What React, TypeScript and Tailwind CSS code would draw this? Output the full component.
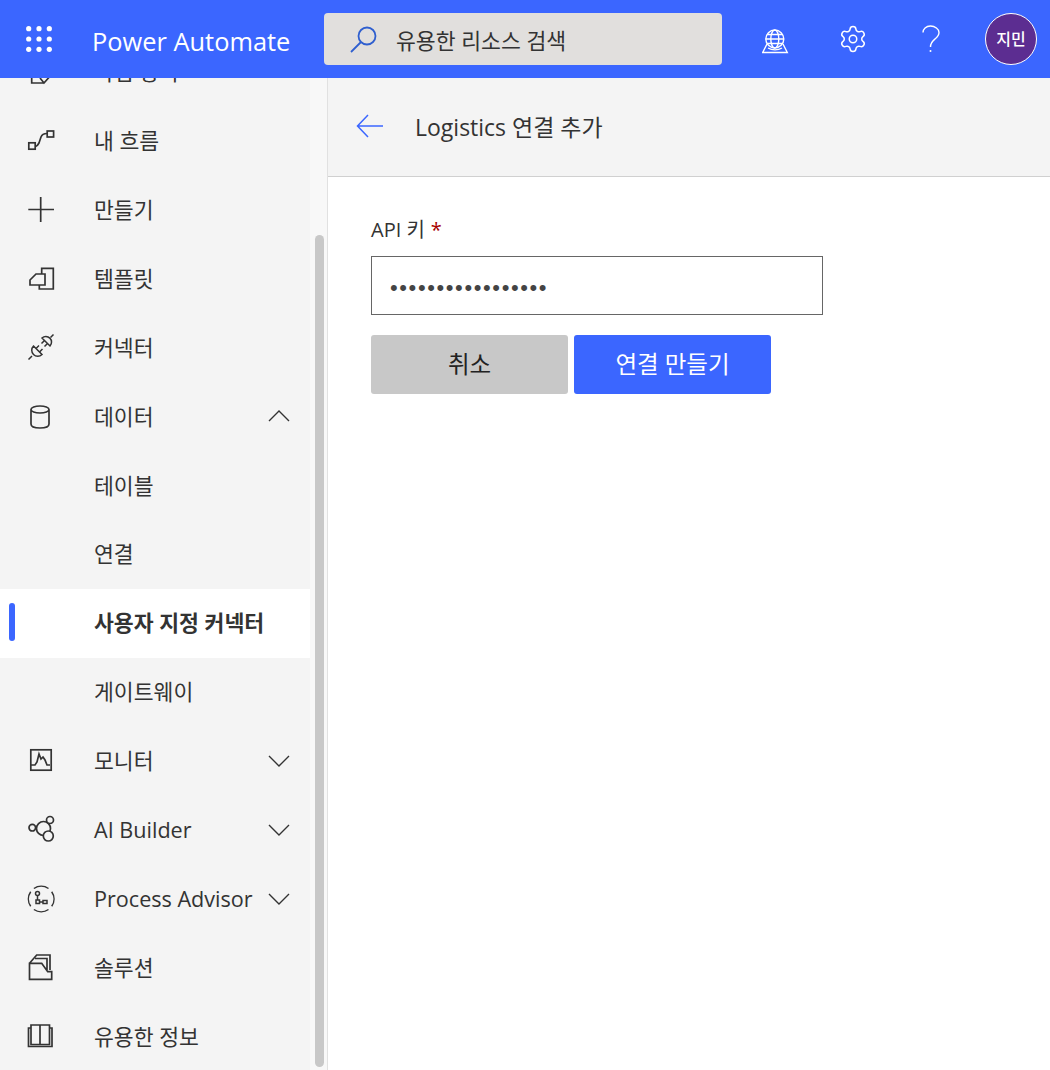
import type { ReactNode } from 'react';
import { Settings } from 'lucide-react';

const ink = '#333333';

function Icon({ children, sw = 1.700 }: { children: ReactNode; sw?: number }) {
  return (
    <svg width="28" height="28" viewBox="0 0 28 28" fill="none" stroke={ink} strokeWidth={sw} className="shrink-0 overflow-visible">
      {children}
    </svg>
  );
}

const icons: Record<string, ReactNode> = {
  approvals: (
    <Icon>
      <path d="M5.700 2v23h12M14 20l4 5 8-9" />
    </Icon>
  ),
  flows: (
    <Icon>
      <rect x="2.800" y="15.800" width="6.400" height="6.400" />
      <rect x="21.200" y="4" width="6.400" height="6" />
      <path d="M9.500 19.500c1.500-.5 2.500-1.500 3.500-3.500l2-6c.7-2 2.500-3.500 6-3.500" />
    </Icon>
  ),
  create: (
    <Icon>
      <path d="M14.700 1v25M2.300 13.500h25.700" />
    </Icon>
  ),
  templates: (
    <Icon>
      <path d="M4 15l6-6h9v11H4zM15.700 9V3.300h11.600V24h-14v-4" />
    </Icon>
  ),
  connectors: (
    <Icon sw={1.500}>
      <path d="M2.500 25.500L6 22M24.500 3.500l3-3" />
      <path d="M7.500 12L16 20.500A6 6 0 0 1 7.500 12ZM16 4L24 12A5.660 5.660 0 0 0 16 4Z" />
      <path d="M10 14.500l3-3M13.500 18l3-3M18.500 6.500l-3 3M21.500 9.500l-3 3" />
    </Icon>
  ),
  data: (
    <Icon>
      <path d="M5 6.500c0-2 4-3.500 9-3.500s9 1.500 9 3.500-4 3.500-9 3.500-9-1.500-9-3.500zM5 6.500V21c0 2.500 4 4 9 4s9-1.500 9-4V6.500" />
    </Icon>
  ),
  monitor: (
    <Icon>
      <rect x="4.800" y="2.800" width="20.400" height="20.400" />
      <path d="M5 18h4l2-3 2-8 2 5 2-2 2 3 2 5h3" />
    </Icon>
  ),
  ai: (
    <Icon>
      <circle cx="6.300" cy="11.700" r="3.300" />
      <circle cx="17.500" cy="12.500" r="7" />
      <circle cx="24" cy="4" r="3.500" fill="#f4f4f4" />
      <circle cx="22.300" cy="20" r="5" fill="#f4f4f4" />
    </Icon>
  ),
  advisor: (
    <Icon sw={1.500}>
      <path d="M7.900 3.500a12.800 12.800 0 0 1 14.600 0M25.700 6.700a12.800 12.800 0 0 1 0 14.600M22.500 24.500a12.800 12.800 0 0 1-14.600 0M4.700 21.300a12.800 12.800 0 0 1 0-14.600" />
      <circle cx="11.500" cy="8.500" r="2" />
      <rect x="10" y="15" width="3.500" height="3.500" />
      <rect x="17" y="15.500" width="4" height="3" />
      <path d="M11.500 10.500V15M13.500 17h3.500" />
    </Icon>
  ),
  solutions: (
    <Icon>
      <path d="M3.500 9.300h12.200l6 8.400h4V25.300H3.500zM3.500 9.300L10.700 1H24v15M9 4.500h12V16" />
    </Icon>
  ),
  learn: (
    <Icon>
      <path d="M5 2h9v19.500H5zM14 2h9.500v19.500H14zM5 5H2.500v18.500H26V5h-2.500" />
    </Icon>
  ),
};

const navItems: { label: string; icon?: string; chevron?: 'up' | 'down'; active?: boolean }[] = [
  { label: '작업 항목', icon: 'approvals' },
  { label: '내 흐름', icon: 'flows' },
  { label: '만들기', icon: 'create' },
  { label: '템플릿', icon: 'templates' },
  { label: '커넥터', icon: 'connectors' },
  { label: '데이터', icon: 'data', chevron: 'up' },
  { label: '테이블' },
  { label: '연결' },
  { label: '사용자 지정 커넥터', active: true },
  { label: '게이트웨이' },
  { label: '모니터', icon: 'monitor', chevron: 'down' },
  { label: 'AI Builder', icon: 'ai', chevron: 'down' },
  { label: 'Process Advisor', icon: 'advisor', chevron: 'down' },
  { label: '솔루션', icon: 'solutions' },
  { label: '유용한 정보', icon: 'learn' },
];

function NavRow({ label, icon, chevron, active }: (typeof navItems)[number]) {
  return (
    <div className={`relative flex h-[68.9px] shrink-0 items-center pl-[26px] ${active ? 'bg-white font-bold' : ''}`}>
      {active && <span className="absolute left-[9px] top-[14px] h-[38px] w-[6px] rounded-full bg-[#3b66ff]" />}
      <span className="flex w-[28px] shrink-0 justify-center">{icon && icons[icon]}</span>
      <span className="ml-[40px] whitespace-nowrap text-[21.6px] text-[#333333]">{label}</span>
      {chevron && (
        <svg width="22" height="12" viewBox="0 0 22 12" fill="none" stroke={ink} strokeWidth="1.400" className="absolute left-[268px] top-[28px]">
          <path d={chevron === 'up' ? 'M1 11l10-10 10 10' : 'M1 1l10 10 10-10'} />
        </svg>
      )}
    </div>
  );
}

function Waffle() {
  const dots = [0, 1, 2].flatMap((r) => [0, 1, 2].map((c) => [c, r]));
  return (
    <svg width="26" height="26" viewBox="0 0 26 26" fill="#ffffff">
      {dots.map(([c, r]) => (
        <circle key={`${c}-${r}`} cx={2.700 + c * 10.300} cy={2.700 + r * 10.300} r="2.600" />
      ))}
    </svg>
  );
}

export default function App() {
  return (
    <div className="flex h-[1070px] w-[1050px] flex-col overflow-hidden bg-white font-['Open_Sans','Noto_Sans_CJK_KR',sans-serif] text-[#333333]">
      {/* Top bar */}
      <header className="relative z-10 flex h-[78px] shrink-0 items-center bg-[#3b66ff]">
        <div className="ml-[26px]">
          <Waffle />
        </div>
        <span className="ml-[40px] mt-[4px] w-[232px] whitespace-nowrap text-[25.4px] font-medium text-white">Power Automate</span>
        <div className="flex h-[52px] w-[398px] items-center rounded-[4px] bg-[#e1dfdd] pl-[26px]">
          <svg width="27" height="27" viewBox="0 0 27 27" fill="none" stroke="#2f5fcf" strokeWidth="1.800">
            <circle cx="17" cy="10" r="8.500" />
            <path d="M11 16L1 26" />
          </svg>
          <span className="ml-[19px] mt-[4px] text-[21.6px] text-[#333333]">유용한 리소스 검색</span>
        </div>
        <div className="ml-[40px] mt-[5px]">
          <svg width="27" height="25" viewBox="0 0 27 25" fill="none" stroke="#ffffff" strokeWidth="1.400">
            <circle cx="12.800" cy="10" r="9" />
            <ellipse cx="12.800" cy="10" rx="4" ry="9" />
            <path d="M3.800 10h18M5.500 5.500h14.600M5.500 14.500h14.600M5 15L.7 23.500h24.600L21 15M6 19c4 2.500 10 2.500 14 0" />
          </svg>
        </div>
        <Settings size={30} strokeWidth={1.200} color="#ffffff" className="ml-[49px] shrink-0" />
        <span className="ml-[53px] flex w-[20px] justify-center">
          <svg width="20" height="28" viewBox="0 0 20 28" fill="none" stroke="#ffffff" strokeWidth="1.400">
            <path d="M2 7.500C2 4 5 1 9.500 1S18 4 18 7.500c0 3-1.500 4.500-4 6.500-2.500 2-4.500 3.500-4.500 8" />
            <circle cx="9.500" cy="26" r="1" fill="#ffffff" stroke="none" />
          </svg>
        </span>
        <div className="ml-[44px] flex h-[52px] w-[52px] items-center justify-center rounded-full border-[1.500px] border-white bg-[#5c2d91] text-[16px] font-medium text-white">
          지민
        </div>
      </header>

      <div className="flex min-h-0 flex-1">
        {/* Left nav, scrolled a little way down */}
        <aside className="flex w-[328px] shrink-0 border-r border-[#e1e1e1] bg-[#f4f4f4]">
          <nav className="flex w-[310px] shrink-0 flex-col overflow-hidden">
            <div className="-mt-[40px] flex flex-col">
              {navItems.map((item) => (
                <NavRow key={item.label} {...item} />
              ))}
            </div>
          </nav>
          <div className="flex-1 bg-[#f8f8f8] pl-[5px] pt-[157px]">
            <div className="h-[832px] w-[9px] rounded-full bg-[#c8c8c8]" />
          </div>
        </aside>

        <main className="min-w-0 flex-1">
          <div className="flex h-[99px] items-center border-b border-[#d0d0d0] bg-[#f4f4f4] pb-[2px] pl-[28px]">
            <svg width="28" height="24" viewBox="0 0 28 24" fill="none" stroke="#3b66ff" strokeWidth="1.500">
              <path d="M12 1L1.500 12 12 23M1.500 12H27" />
            </svg>
            <h1 className="ml-[31px] mt-[2px] whitespace-nowrap text-[23px] font-normal text-[#333333]">Logistics 연결 추가</h1>
          </div>

          <form className="pl-[43px] pt-[38px]">
            <label className="flex h-[30px] items-center text-[20px] text-[#333333]">
              API 키 <span className="ml-[6px] text-[#a80000]">*</span>
            </label>
            <input
              type="password"
              readOnly
              value="abcdefghijklmnopq"
              className="mt-[11px] block h-[59px] w-[452px] border border-[#666666] bg-white pl-[18px] pt-[5px] font-['Liberation_Sans',sans-serif] text-[22px] tracking-[1.600px] text-[#444444] outline-none"
            />
            <div className="mt-[20px] flex gap-[6px]">
              <button type="button" className="h-[59px] w-[197px] rounded-[3px] bg-[#c8c8c8] text-[23.5px] text-[#222222]">
                취소
              </button>
              <button type="button" className="h-[59px] w-[197px] rounded-[3px] bg-[#3b66ff] text-[23.5px] text-white">
                연결 만들기
              </button>
            </div>
          </form>
        </main>
      </div>
    </div>
  );
}
